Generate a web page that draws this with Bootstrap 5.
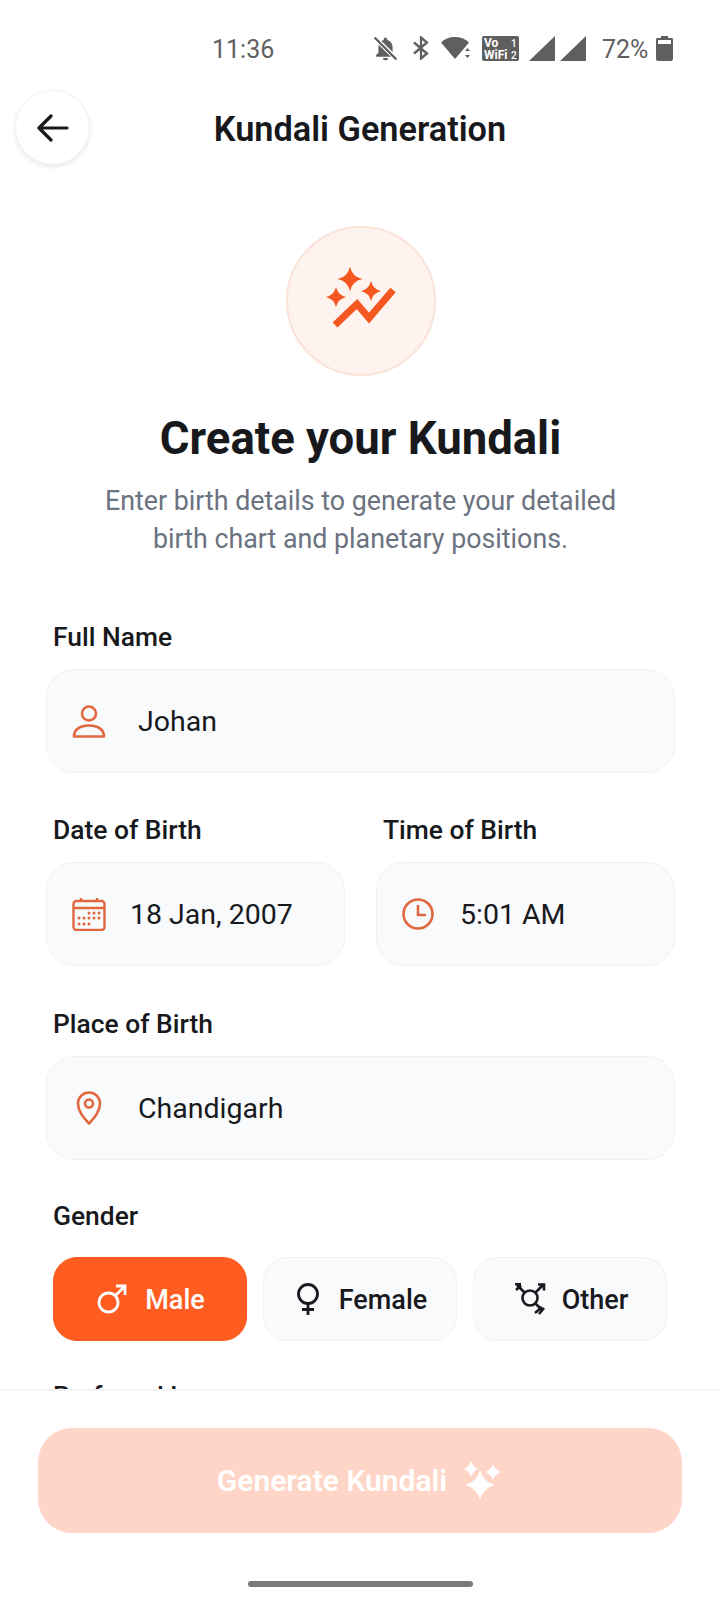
<!DOCTYPE html>
<html lang="en">
<head>
  <meta charset="UTF-8">
  <title>Kundali Generation</title>
  <link href="https://cdn.jsdelivr.net/npm/bootstrap@5.3.3/dist/css/bootstrap.min.css" rel="stylesheet">
  <style>
    html, body { height: 100%; }
    body { font-family: Roboto, "Liberation Sans", sans-serif; color: #17191c; background: #fff; overflow: hidden; }
    .phone { width: 720px; height: 1600px; }
    .status-bar { height: 90px; padding: 6px 0 0 212px; color: #5f5f5f; font-size: 25px; }
    .status-bar svg { display: block; fill: #5f5f5f; }
    .status-text { padding-top: 3px; }
    .clock-text { width: 161px; }
    .top-header { height: 75px; padding-left: 15px; padding-right: 90px; }
    .back-btn { width: 75px; height: 75px; background: #fff; border: 1px solid #f2f2f2; box-shadow: 0 2px 5px rgba(0,0,0,.09); flex-shrink: 0; }
    .page-title { font-size: 34.300px; font-weight: 600; line-height: 40px; margin: 0; padding-top: 2px; }
    .form-scroll { flex: 1 1 0; min-height: 0; overflow: hidden; padding: 0 45px 0 46px; }
    .hero-circle { width: 150px; height: 150px; margin-top: 61px; background: #fef3ee; border: 2px solid #fae3d9; }
    .hero-title { font-size: 45.500px; font-weight: 700; line-height: 54px; margin: 36px 0 0; }
    .hero-sub { font-size: 26.800px; line-height: 38px; color: #6b7280; margin: 16px 0 0; }
    .field-label { display: block; font-size: 26.400px; font-weight: 500; line-height: 30px; margin: 0 0 17px; padding-left: 7px; }
    .field-box { height: 104px; background: #f9fafc; border: 1px solid #f0f1f4; border-radius: 28px; font-size: 28.500px; padding-left: 25px; }
    .field-box svg { flex-shrink: 0; }
    .field-box span { padding-top: 2px; }
    .gap-wide { gap: 32px; }
    .gap-mid { gap: 24px; }
    .gap-clock { gap: 26px; }
    .date-row { --bs-gutter-x: 31px; }
    .mt-field { margin-top: 42px; }
    .gender-row { padding: 0 8px 0 7px; gap: 16px; margin-top: 26px; }
    .gender-btn { flex: 1 1 0; height: 84px; border-radius: 24px; background: #f9fafc; border: 1px solid #f0f1f4; color: #17191c; font-size: 27px; font-weight: 500; padding: 0 0 0 2px; gap: 18px; }
    .gender-btn span { padding-top: 3px; }
    .gender-btn.is-on { background: #ff5c22; border-color: #ff5c22; color: #fff; }
    .bottom-bar { height: 211px; border-top: 2px solid #f3f4f6; padding: 37px 38px 0; }
    .generate-btn { width: 100%; height: 105px; border: 0; border-radius: 34px; background: #fed5c6; color: #fff; font-size: 30px; font-weight: 600; gap: 16px; opacity: 1; }
    .home-bar { width: 225px; height: 6px; margin: 48px auto 0; border-radius: 3px; background: #7b7b7b; }
  </style>
</head>
<body>
<div class="phone d-flex flex-column">

  <!-- barra de estado -->
  <div class="status-bar d-flex align-items-center">
    <span class="clock-text status-text">11:36</span>
    <svg width="25" height="25" viewBox="0 0 24 24" style="margin-right:15px">
      <path d="M12 1.500c-1 0-1.700.7-1.700 1.700v.6C7 4.600 5.200 7.400 5.200 11v5L2.800 18.500V20h18.400v-1.500L18.800 16v-5c0-3.600-1.800-6.400-5.100-7.200v-.6c0-1-.7-1.700-1.700-1.700zM9.500 21c0 1.300 1.100 2.300 2.500 2.300s2.500-1 2.500-2.300z"/>
      <path d="M1.500 1.500 23 22.500" stroke="#fff" stroke-width="4.500"/>
      <path d="M1.500 1.500 22.500 22.500" stroke="#5f5f5f" stroke-width="2.200"/>
    </svg>
    <svg width="16" height="24" viewBox="0 0 16 24" style="margin-right:12px">
      <path d="M1 6.500 14 17.500 8 22.500V1.500L14 6.500 1 17.500" fill="none" stroke="#5f5f5f" stroke-width="2.300"/>
    </svg>
    <svg width="30" height="24" viewBox="0 0 30 24" style="margin-right:11px">
      <path d="M0 6.500C3.500 3 8 1 14 1s10.500 2 14 5.500L14 23z"/>
      <path d="M24 15l2.500-3 2.500 3zM24 19l2.500 3 2.500-3z"/>
    </svg>
    <svg width="37" height="25" viewBox="0 0 37 25" style="margin-right:10px">
      <rect width="37" height="25" rx="2"/>
      <text x="2" y="11" font-family="Roboto, sans-serif" font-size="12" font-weight="700" fill="#fff">Vo</text>
      <text x="2" y="22.500" font-family="Roboto, sans-serif" font-size="12" font-weight="700" fill="#fff">WiFi</text>
      <text x="29" y="11" font-family="Roboto, sans-serif" font-size="10" font-weight="500" fill="#fff">1</text>
      <text x="29" y="22.500" font-family="Roboto, sans-serif" font-size="10" font-weight="500" fill="#fff">2</text>
    </svg>
    <svg width="26" height="25" viewBox="0 0 26 25" style="margin-right:5px"><path d="M26 0v25H0z"/></svg>
    <svg width="26" height="25" viewBox="0 0 26 25" style="margin-right:16px"><path d="M26 0v25H0z"/></svg>
    <span class="status-text" style="margin-right:8px">72%</span>
    <svg width="17" height="25" viewBox="0 0 17 25">
      <path d="M5 0h7v2h3.500c.8 0 1.500.7 1.500 1.500V23c0 1.100-.9 2-2 2H2c-1.100 0-2-.9-2-2V3.500C0 2.700.7 2 1.500 2H5z"/>
      <rect x="2" y="4" width="13" height="4" fill="#fff"/>
    </svg>
  </div>

  <!-- cabecera -->
  <div class="top-header d-flex align-items-center">
    <button type="button" class="back-btn btn rounded-circle d-flex align-items-center justify-content-center p-0" aria-label="Back">
      <svg width="32" height="28" viewBox="0 0 32 28" fill="none" stroke="#17191c" stroke-width="3.200" stroke-linecap="round" stroke-linejoin="round"><path d="M30 14H2M14 2 2 14l12 12"/></svg>
    </button>
    <h1 class="page-title flex-grow-1 text-center">Kundali Generation</h1>
  </div>

  <div class="form-scroll">
    <div class="hero-circle rounded-circle d-flex align-items-center justify-content-center mx-auto">
      <svg width="150" height="150" viewBox="0 0 150 150" class="flex-shrink-0">
        <g fill="#f4571f">
          <path d="M64 40.500Q66 51 76.500 53 66 55 64 65.500 62 55 51.500 53 62 51 64 40.500Z"/>
          <path d="M50 61Q52 69 60 71 52 73 50 81 48 73 40 71 48 69 50 61Z"/>
          <path d="M85 55Q87 63 95 65 87 67 85 75 83 67 75 65 83 63 85 55Z"/>
        </g>
        <path d="M49 99 71 78 83 92 107 64" fill="none" stroke="#f4571f" stroke-width="7"/>
      </svg>
    </div>
    <h2 class="hero-title text-center">Create your Kundali</h2>
    <p class="hero-sub text-center">Enter birth details to generate your detailed<br>birth chart and planetary positions.</p>

    <label class="field-label" style="margin-top:64px">Full Name</label>
    <div class="field-box d-flex align-items-center gap-wide">
      <svg width="34" height="34" viewBox="0 0 34 34" fill="none" stroke="#e0673e" stroke-width="2.600"><circle cx="17" cy="9.500" r="7"/><path d="M2 32.500c0-7 6-11 15-11s15 4 15 11z" stroke-linejoin="round"/></svg>
      <span>Johan</span>
    </div>

    <div class="row date-row mt-field">
      <div class="col-6">
        <label class="field-label">Date of Birth</label>
        <div class="field-box d-flex align-items-center gap-mid">
          <svg width="34" height="34" viewBox="0 0 34 34" fill="none" stroke="#e0673e" stroke-width="2.400">
            <rect x="1.500" y="4" width="31" height="29" rx="3"/><path d="M1.500 11h31M9 1v4M25 1v4"/>
            <g fill="#e0673e" stroke="none">
              <circle cx="17" cy="16" r="1.500"/><circle cx="22" cy="16" r="1.500"/><circle cx="27" cy="16" r="1.500"/>
              <circle cx="7" cy="21" r="1.500"/><circle cx="12" cy="21" r="1.500"/><circle cx="17" cy="21" r="1.500"/><circle cx="22" cy="21" r="1.500"/><circle cx="27" cy="21" r="1.500"/>
              <circle cx="7" cy="27" r="1.500"/><circle cx="12" cy="27" r="1.500"/><circle cx="17" cy="27" r="1.500"/>
            </g>
          </svg>
          <span>18 Jan, 2007</span>
        </div>
      </div>
      <div class="col-6">
        <label class="field-label">Time of Birth</label>
        <div class="field-box d-flex align-items-center gap-clock">
          <svg width="32" height="32" viewBox="0 0 32 32" fill="none" stroke="#e0673e" stroke-width="2.600"><circle cx="16" cy="16" r="14.500"/><path d="M16 7v10h8"/></svg>
          <span>5:01 AM</span>
        </div>
      </div>
    </div>

    <label class="field-label" style="margin-top:43px">Place of Birth</label>
    <div class="field-box d-flex align-items-center gap-wide">
      <svg width="34" height="34" viewBox="0 0 34 34" fill="none" stroke="#e0673e" stroke-width="2.600"><path d="M17 32.500C11 26 6 20 6 12.500 6 6 11 1.500 17 1.500S28 6 28 12.500C28 20 23 26 17 32.500z" stroke-linejoin="round"/><circle cx="17" cy="12.500" r="4"/></svg>
      <span>Chandigarh</span>
    </div>

    <label class="field-label" style="margin-top:41px">Gender</label>
    <div class="gender-row d-flex">
      <button type="button" class="gender-btn is-on btn d-flex align-items-center justify-content-center">
        <svg width="30" height="30" viewBox="0 0 30 30" fill="none" stroke="#fff" stroke-width="2.800"><circle cx="11.500" cy="18.500" r="9.500"/><path d="M18 12 28 2M19 2h9v9"/></svg>
        <span>Male</span>
      </button>
      <button type="button" class="gender-btn btn d-flex align-items-center justify-content-center">
        <svg width="26" height="32" viewBox="0 0 26 32" fill="none" stroke="#17191c" stroke-width="2.800"><circle cx="13" cy="11" r="9.500"/><path d="M13 20.500V32M7 26.500h12"/></svg>
        <span>Female</span>
      </button>
      <button type="button" class="gender-btn btn d-flex align-items-center justify-content-center" style="gap:16px">
        <svg width="32" height="32" viewBox="0 0 32 32" fill="none" stroke="#17191c" stroke-width="2.600"><circle cx="16" cy="15" r="7.500"/><path d="M11 10 3 2M2 7 7 2.500M1 1h6M21 10l8-8M24 1.500h6v6M21 20l7 7M25 31l5-6M21 30l7-6"/></svg>
        <span>Other</span>
      </button>
    </div>

    <label class="field-label" style="margin-top:40px">Preferred Language</label>
  </div>

  <div class="bottom-bar">
    <button type="button" class="generate-btn btn d-flex align-items-center justify-content-center">
      <span>Generate Kundali</span>
      <svg width="40" height="40" viewBox="0 0 40 40" fill="#fff">
        <path d="M17 9Q20 21 32 24 20 27 17 39 14 27 2 24 14 21 17 9Z"/>
        <path d="M8 0Q10 6 15 8 10 10 8 16 6 10 1 8 6 6 8 0Z"/>
        <path d="M30 3Q32 9 38 11 32 13 30 19 28 13 22 11 28 9 30 3Z"/>
      </svg>
    </button>
    <div class="home-bar"></div>
  </div>

</div>
<script src="https://cdn.jsdelivr.net/npm/bootstrap@5.3.3/dist/js/bootstrap.bundle.min.js"></script>
</body>
</html>
